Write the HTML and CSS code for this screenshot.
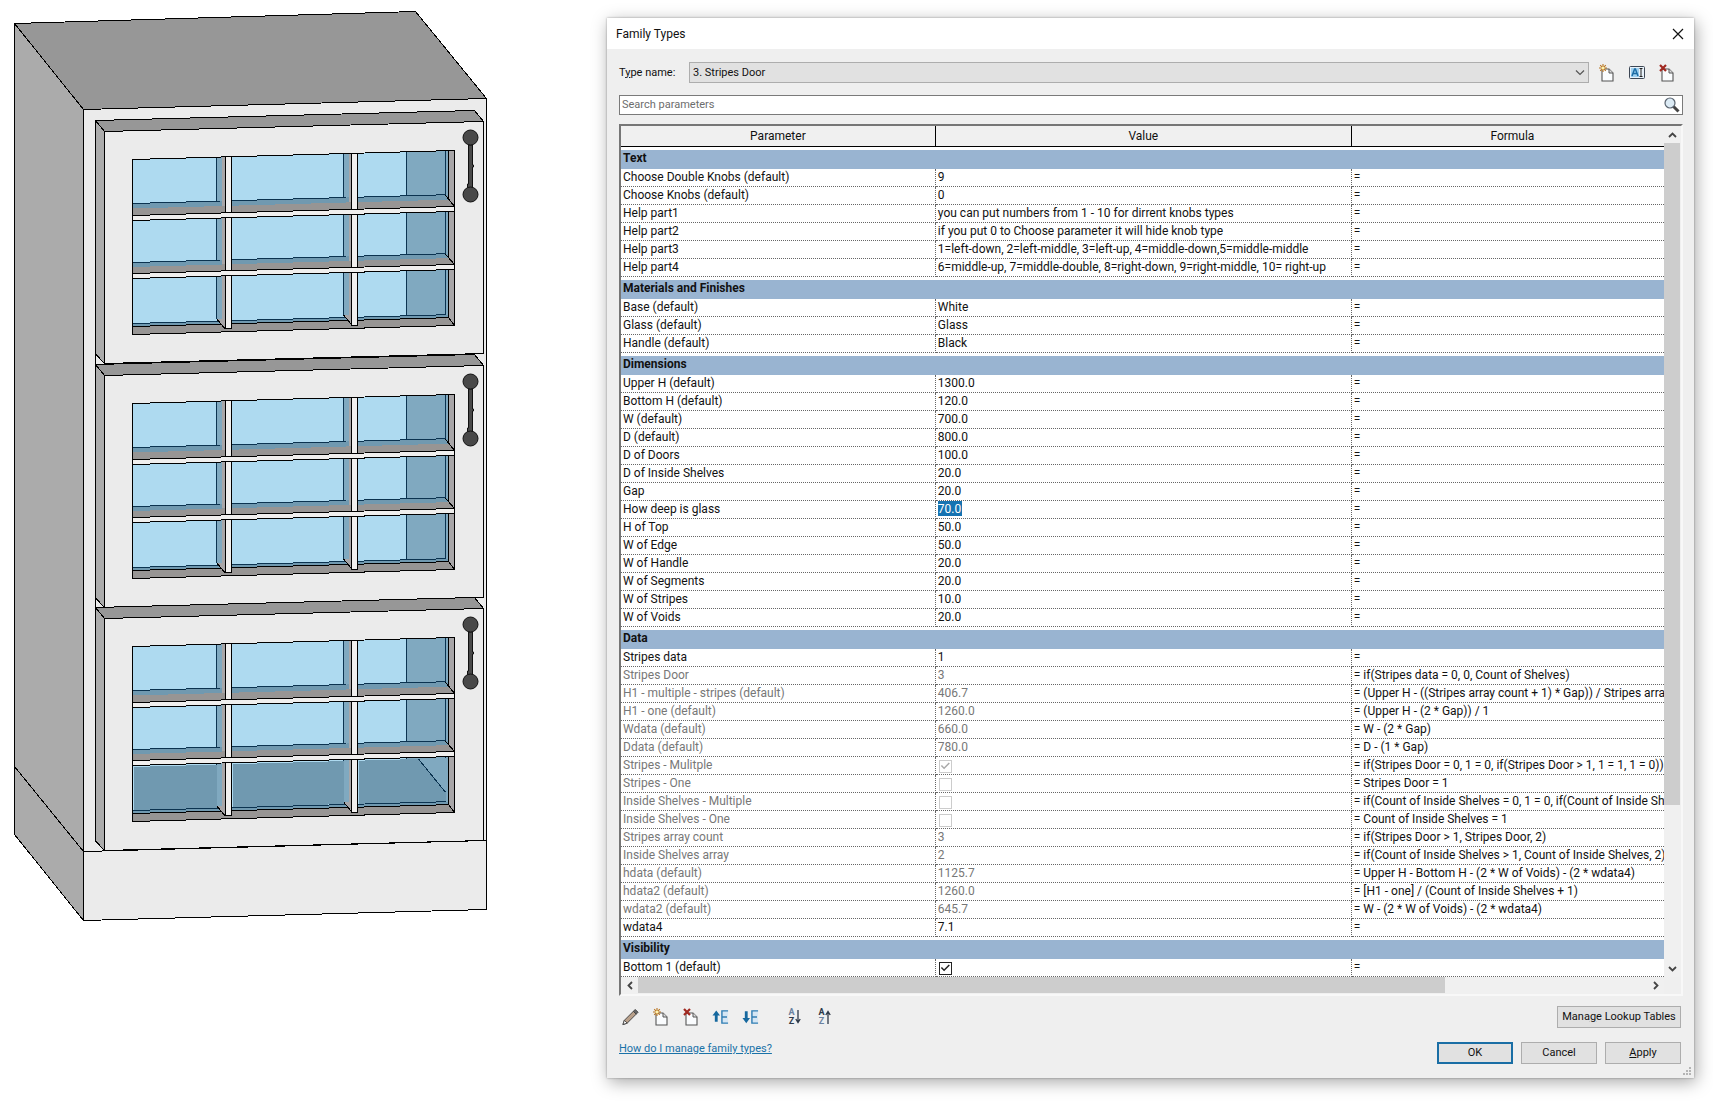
FILE: index.html
```html
<!DOCTYPE html>
<html lang="en">
<head>
<meta charset="utf-8">
<title>Family Types</title>
<link rel="stylesheet" href="styles.css">
</head>
<body>
<main class="workspace">
  <section class="viewport">
    <svg class="cabinet" viewBox="0 0 500 940" role="img" aria-label="Cabinet with three glazed doors">
      <defs>
        <g id="door">
          <path class="face-side" d="M95.5 120.5L104.5 131.5V363.5L95.5 354Z"/>
          <path class="face-top" d="M95.5 120.5L474.5 110.5L483.5 121.5L104.5 131.5Z"/>
          <path class="face-front" d="M104.5 131.5L483.5 121.5V353.5L104.5 363.5Z"/>
          <g transform="matrix(1 -.028 0 1 132.5 0)">
            <rect class="glass" x="0" y="159.5" width="322" height="175"/>
            <rect class="glass-side" x="274" y="159.5" width="42" height="175"/>
            <rect class="glass-side" x="84" y="159.5" width="6" height="175"/>
            <rect class="glass-side" x="211" y="159.5" width="6" height="175"/>
            <path class="blue-line" d="M84 159.5V321M211 159.5V321M274 159.5V326M313 159.5V326"/>
            <rect class="glass-floor" x="0" y="203.5" width="316" height="6"/>
            <rect class="glass-floor" x="0" y="262.5" width="316" height="6"/>
            <rect class="glass-floor" x="0" y="323.5" width="316" height="4"/>
            <path class="blue-line" d="M0 203.5H87M99 203.5H213M225 203.5H313M0 262.5H87M99 262.5H213M225 262.5H313M0 323.5H87M99 323.5H213M225 323.5H313"/>
            <rect class="grey-side" x="89" y="159.5" width="4" height="172"/>
            <rect class="grey-side" x="216" y="159.5" width="4" height="172"/>
            <rect class="grey-side" x="316" y="159.5" width="6" height="175"/>
            <path class="line" d="M316 159.5V327"/>
            <path class="grey-floor" d="M0 208.5H317L322 215.5H0ZM0 267H317L322 273.5H0Z"/>
            <path class="grey-floor edged" d="M0 326.5H316L322 334.5H0Z"/>
            <path class="grey-side" d="M84 321L93 332V321Z"/>
            <path class="grey-side" d="M211 321L220 332V321Z"/>
            <path class="line" d="M84 321L93 332M211 321L220 332M313 204L322 215.5M313 263L322 273.5"/>
            <rect class="bar" x="93" y="159.5" width="6" height="172"/>
            <rect class="bar" x="219" y="159.5" width="6" height="172"/>
            <rect class="bar" x="0" y="215.5" width="322" height="5"/>
            <rect class="bar" x="0" y="273.5" width="322" height="5"/>
            <rect class="outline" x="0" y="159.5" width="322" height="175"/>
          </g>
          <path class="handle" d="M468.5 145H472.5V165H473.5V167H472.5V188H467.5V184H468.5Z"/>
          <circle class="handle" cx="470.5" cy="137.5" r="7.5"/>
          <circle class="handle" cx="470.5" cy="194.5" r="7.5"/>
        </g>
      </defs>
      <path class="face-top" d="M14.5 23.5L415.5 11.5L486.5 98.5L83.5 109.5Z"/>
      <path class="face-side" d="M14.5 23.5L83.5 109.5V920.5L14.5 834.5Z"/>
      <path class="face-front" d="M83.5 109.5L486.5 98.5V909.5L83.5 920.5Z"/>
      <path class="line" d="M14.5 766.5L83.5 851.5L486.5 840.5"/>
      <path class="line" d="M95.5 120V840"/>
      <use href="#door"/>
      <use href="#door" y="244"/>
      <use href="#door" y="487"/>
      <g transform="matrix(1 -.028 0 1 132.5 487)">
        <rect class="glass-floor" x="1" y="280" width="83" height="43"/>
        <rect class="glass-floor" x="100" y="280" width="111" height="43"/>
        <rect class="glass-floor" x="226" y="280" width="87" height="43"/>
        <path class="glass-side" d="M286 280L313 314V280Z"/>
        <path class="blue-line" d="M286 280L313 314"/>
      </g>
    </svg>
  </section>

  <section class="dialog" role="dialog" aria-labelledby="dialog-title">
    <header class="titlebar">
      <h1 id="dialog-title">Family Types</h1>
      <button class="icon-button" type="button" aria-label="Close">
        <svg width="12" height="12" viewBox="0 0 12 12"><path d="M1 1L11 11M11 1L1 11" stroke="#111" stroke-width="1.2" fill="none"/></svg>
      </button>
    </header>

    <div class="dialog-body">
      <div class="type-row">
        <label for="type-name">T<u>y</u>pe name:</label>
        <span class="select-wrap">
          <select id="type-name"><option>3. Stripes Door</option></select>
          <svg class="chevron" width="10" height="6" viewBox="0 0 10 6"><path d="M1 .5L5 4.5L9 .5" stroke="#555" stroke-width="1.2" fill="none"/></svg>
        </span>
        <div class="type-tools">
          <button class="icon-button" type="button" aria-label="New type">
            <svg width="16" height="18" viewBox="0 0 16 18"><path d="M3 5H10L14 9V17H3Z" fill="#fafcfe" stroke="#555" stroke-width="1.1"/><path d="M10 5V9H14" fill="#ddd" stroke="#555"/><path d="M4 0V8M0 4H8M1.2 1.2L6.8 6.8M6.8 1.2L1.2 6.8" stroke="#b87420" stroke-width="1.1"/><circle cx="4" cy="4" r="1.6" fill="#fff3b0"/></svg>
          </button>
          <button class="icon-button" type="button" aria-label="Rename type">
            <svg width="16" height="18" viewBox="0 0 16 18"><rect x=".5" y="2.5" width="15" height="12" rx="1" fill="#e8f2fa" stroke="#3c4654"/><rect x="2" y="4" width="8" height="9" fill="#9fd0f0"/><path d="M3 12L5.600 5H6.400L9 12M4 9.500H8" stroke="#1c6ca4" stroke-width="1.500" fill="none"/><path d="M10.500 4.500H13.500M12 4.500V12.500M10.500 12.500H13.500" stroke="#222" fill="none"/></svg>
          </button>
          <button class="icon-button" type="button" aria-label="Delete type">
            <svg width="16" height="18" viewBox="0 0 16 18"><path d="M3 5H10L14 9V17H3Z" fill="#fafcfe" stroke="#555" stroke-width="1.1"/><path d="M10 5V9H14" fill="#ddd" stroke="#555"/><path d="M1 1L7 7M7 1L1 7" stroke="#a02820" stroke-width="2.200"/></svg>
          </button>
        </div>
      </div>

      <div class="search">
        <input type="search" placeholder="Search parameters" aria-label="Search parameters">
        <button class="icon-button" type="button" aria-label="Search">
          <svg width="16" height="16" viewBox="0 0 16 16"><path d="M9.500 9.500L14.500 14.500" stroke="#444" stroke-width="3"/><circle cx="6" cy="6" r="5" fill="#dcebf5" stroke="#5a6470" stroke-width="1.200"/></svg>
        </button>
      </div>

      <div class="grid-frame">
        <div class="grid-view">
          <table class="params">
            <colgroup><col class="col-name"><col class="col-value"><col></colgroup>
            <thead><tr><th>Parameter</th><th>Value</th><th>Formula</th></tr></thead>
            <tbody>
              <tr class="group"><th colspan="3">Text</th></tr>
              <tr><td>Choose Double Knobs (default)</td><td>9</td><td>=</td></tr>
              <tr><td>Choose Knobs (default)</td><td>0</td><td>=</td></tr>
              <tr><td>Help part1</td><td>you can put numbers from 1 - 10 for dirrent knobs types</td><td>=</td></tr>
              <tr><td>Help part2</td><td>if you put 0 to Choose parameter it will hide knob type</td><td>=</td></tr>
              <tr><td>Help part3</td><td>1=left-down, 2=left-middle, 3=left-up, 4=middle-down,5=middle-middle</td><td>=</td></tr>
              <tr><td>Help part4</td><td>6=middle-up, 7=middle-double, 8=right-down, 9=right-middle, 10= right-up</td><td>=</td></tr>
            </tbody>
            <tbody>
              <tr class="group"><th colspan="3">Materials and Finishes</th></tr>
              <tr><td>Base (default)</td><td>White</td><td>=</td></tr>
              <tr><td>Glass (default)</td><td>Glass</td><td>=</td></tr>
              <tr><td>Handle (default)</td><td>Black</td><td>=</td></tr>
            </tbody>
            <tbody>
              <tr class="group"><th colspan="3">Dimensions</th></tr>
              <tr><td>Upper H (default)</td><td>1300.0</td><td>=</td></tr>
              <tr><td>Bottom H (default)</td><td>120.0</td><td>=</td></tr>
              <tr><td>W (default)</td><td>700.0</td><td>=</td></tr>
              <tr><td>D (default)</td><td>800.0</td><td>=</td></tr>
              <tr><td>D of Doors</td><td>100.0</td><td>=</td></tr>
              <tr><td>D of Inside Shelves</td><td>20.0</td><td>=</td></tr>
              <tr><td>Gap</td><td>20.0</td><td>=</td></tr>
              <tr><td><label for="glass-depth">How deep is glass</label></td><td><input class="cell-edit" id="glass-depth" type="text" value="70.0"></td><td>=</td></tr>
              <tr><td>H of Top</td><td>50.0</td><td>=</td></tr>
              <tr><td>W of Edge</td><td>50.0</td><td>=</td></tr>
              <tr><td>W of Handle</td><td>20.0</td><td>=</td></tr>
              <tr><td>W of Segments</td><td>20.0</td><td>=</td></tr>
              <tr><td>W of Stripes</td><td>10.0</td><td>=</td></tr>
              <tr><td>W of Voids</td><td>20.0</td><td>=</td></tr>
            </tbody>
            <tbody>
              <tr class="group"><th colspan="3">Data</th></tr>
              <tr><td>Stripes data</td><td>1</td><td>=</td></tr>
              <tr class="driven"><td>Stripes Door</td><td>3</td><td>= if(Stripes data = 0, 0, Count of Shelves)</td></tr>
              <tr class="driven"><td>H1 - multiple - stripes (default)</td><td>406.7</td><td>= (Upper H - ((Stripes array count + 1) * Gap)) / Stripes array count</td></tr>
              <tr class="driven"><td>H1 - one (default)</td><td>1260.0</td><td>= (Upper H - (2 * Gap)) / 1</td></tr>
              <tr class="driven"><td>Wdata (default)</td><td>660.0</td><td>= W - (2 * Gap)</td></tr>
              <tr class="driven"><td>Ddata (default)</td><td>780.0</td><td>= D - (1 * Gap)</td></tr>
              <tr class="driven"><td><label for="c1">Stripes - Mulitple</label></td><td><input type="checkbox" id="c1" checked disabled></td><td>= if(Stripes Door = 0, 1 = 0, if(Stripes Door &gt; 1, 1 = 1, 1 = 0))</td></tr>
              <tr class="driven"><td><label for="c2">Stripes - One</label></td><td><input type="checkbox" id="c2" disabled></td><td>= Stripes Door = 1</td></tr>
              <tr class="driven"><td><label for="c3">Inside Shelves - Multiple</label></td><td><input type="checkbox" id="c3" disabled></td><td>= if(Count of Inside Shelves = 0, 1 = 0, if(Count of Inside Shelves</td></tr>
              <tr class="driven"><td><label for="c4">Inside Shelves - One</label></td><td><input type="checkbox" id="c4" disabled></td><td>= Count of Inside Shelves = 1</td></tr>
              <tr class="driven"><td>Stripes array count</td><td>3</td><td>= if(Stripes Door &gt; 1, Stripes Door, 2)</td></tr>
              <tr class="driven"><td>Inside Shelves array</td><td>2</td><td>= if(Count of Inside Shelves &gt; 1, Count of Inside Shelves, 2)</td></tr>
              <tr class="driven"><td>hdata (default)</td><td>1125.7</td><td>= Upper H - Bottom H - (2 * W of Voids) - (2 * wdata4)</td></tr>
              <tr class="driven"><td>hdata2 (default)</td><td>1260.0</td><td>= [H1 - one] / (Count of Inside Shelves + 1)</td></tr>
              <tr class="driven"><td>wdata2 (default)</td><td>645.7</td><td>= W - (2 * W of Voids) - (2 * wdata4)</td></tr>
              <tr><td>wdata4</td><td>7.1</td><td>=</td></tr>
            </tbody>
            <tbody>
              <tr class="group"><th colspan="3">Visibility</th></tr>
              <tr><td><label for="c5">Bottom 1 (default)</label></td><td><input type="checkbox" id="c5" checked></td><td>=</td></tr>
            </tbody>
          </table>
        </div>
        <div class="scroll-v">
          <button class="arrow" type="button" aria-label="Scroll up"><svg width="9" height="6" viewBox="0 0 9 6"><path d="M1 5L4.500 1.500L8 5" stroke="#444" stroke-width="1.800" fill="none"/></svg></button>
          <div class="track"><div class="thumb"></div></div>
          <button class="arrow" type="button" aria-label="Scroll down"><svg width="9" height="6" viewBox="0 0 9 6"><path d="M1 1L4.500 4.500L8 1" stroke="#444" stroke-width="1.800" fill="none"/></svg></button>
        </div>
        <div class="scroll-h">
          <button class="arrow" type="button" aria-label="Scroll left"><svg width="6" height="9" viewBox="0 0 6 9"><path d="M5 1L1.500 4.500L5 8" stroke="#444" stroke-width="1.800" fill="none"/></svg></button>
          <div class="track"><div class="thumb"></div></div>
          <button class="arrow" type="button" aria-label="Scroll right"><svg width="6" height="9" viewBox="0 0 6 9"><path d="M1 1L4.500 4.500L1 8" stroke="#444" stroke-width="1.800" fill="none"/></svg></button>
        </div>
      </div>

      <div class="toolbar">
        <div class="tools">
          <button class="icon-button" type="button" aria-label="Edit parameter">
            <svg width="18" height="18" viewBox="0 0 18 18"><path d="M1 17L2.500 12.500L12 3L15 6L5.500 15.500Z" fill="#b9a08a" stroke="#444"/><path d="M1 17L2.500 12.500L5.500 15.500Z" fill="#fff" stroke="#444"/><path d="M12 3L14 1L17 4L15 6Z" fill="#666" stroke="#444"/></svg>
          </button>
          <button class="icon-button" type="button" aria-label="New parameter">
            <svg width="16" height="18" viewBox="0 0 16 18"><path d="M3 5H10L14 9V17H3Z" fill="#fafcfe" stroke="#555" stroke-width="1.1"/><path d="M10 5V9H14" fill="#ddd" stroke="#555"/><path d="M4 0V8M0 4H8M1.200 1.200L6.800 6.800M6.800 1.200L1.200 6.800" stroke="#b87420" stroke-width="1.1"/><circle cx="4" cy="4" r="1.600" fill="#fff3b0"/></svg>
          </button>
          <button class="icon-button" type="button" aria-label="Delete parameter">
            <svg width="16" height="18" viewBox="0 0 16 18"><path d="M3 5H10L14 9V17H3Z" fill="#fafcfe" stroke="#555" stroke-width="1.1"/><path d="M10 5V9H14" fill="#ddd" stroke="#555"/><path d="M1 1L7 7M7 1L1 7" stroke="#a02820" stroke-width="2.200"/></svg>
          </button>
          <button class="icon-button" type="button" aria-label="Move up">
            <svg width="18" height="18" viewBox="0 0 18 18"><path d="M4.500 2L8.500 7.500H6V14H3V7.500H.5Z" fill="#16689e"/><path d="M11 3H17V8H11ZM11 10H17V15H11Z" fill="#d5e6f4"/><path d="M17 2.500H10.500V15.500H17M10.500 9H16" stroke="#2c7cb4" stroke-width="1.500" fill="none"/></svg>
          </button>
          <button class="icon-button" type="button" aria-label="Move down">
            <svg width="18" height="18" viewBox="0 0 18 18"><path d="M4.500 15.500L8.500 10H6V3H3V10H.5Z" fill="#16689e"/><path d="M11 3H17V8H11ZM11 10H17V15H11Z" fill="#d5e6f4"/><path d="M17 2.500H10.500V15.500H17M10.500 9H16" stroke="#2c7cb4" stroke-width="1.500" fill="none"/></svg>
          </button>
          <button class="icon-button sort" type="button" aria-label="Sort ascending">
            <span class="az"><b class="soft">A</b><b>Z</b></span>
            <svg width="6" height="14" viewBox="0 0 6 14"><path d="M3 0V12M.8 9L3 12.500L5.200 9" stroke="#2c3848" stroke-width="1.300" fill="none"/></svg>
          </button>
          <button class="icon-button" type="button" aria-label="Sort descending">
            <span class="az"><b>A</b><b class="soft">Z</b></span>
            <svg width="6" height="14" viewBox="0 0 6 14"><path d="M3 14V2M.8 5L3 1.500L5.200 5" stroke="#2c3848" stroke-width="1.300" fill="none"/></svg>
          </button>
        </div>
        <button class="push wide" type="button">Mana<u>g</u>e Lookup Tables</button>
      </div>

      <footer class="actions">
        <a href="#help">How do I manage family types?</a>
        <div class="buttons">
          <button class="push default" type="button">OK</button>
          <button class="push" type="button">Cancel</button>
          <button class="push" type="button"><u>A</u>pply</button>
        </div>
      </footer>
    </div>
    <svg class="grip" width="9" height="9" viewBox="0 0 9 9"><path d="M6 0h2v2h-2zM3 3h2v2h-2zM6 3h2v2h-2zM0 6h2v2h-2zM3 6h2v2h-2zM6 6h2v2h-2z" fill="#b4b4b4"/></svg>
  </section>
</main>
</body>
</html>
```
FILE: styles.css
```css
* {
  box-sizing: border-box;
}

body {
  margin: 0;
  background: #fff;
  color: #111;
  font: 12px/16px Roboto, "Open Sans", sans-serif;
}

button,
input,
select {
  margin: 0;
  font: inherit;
  color: inherit;
}

.workspace {
  display: grid;
  grid-template-columns: minmax(0, 607fr) minmax(0, 1087fr);
  align-items: start;
  min-height: 100vh;
  padding-right: 19px;
}

/* Cabinet drawing */

.cabinet {
  display: block;
  width: 500px;
  max-width: 100%;
  shape-rendering: crispEdges;
}

.face-top { fill: #979797; stroke: #000; }
.face-side { fill: #ababab; stroke: #000; }
.face-front { fill: #ebebeb; stroke: #000; }
.line { fill: none; stroke: #000; }
.outline { fill: none; stroke: #000; }
.blue-line { fill: none; stroke: #0b3350; }
.glass { fill: #aedaf0; }
.glass-side { fill: #80a9c0; }
.glass-floor { fill: #7099b0; }
.grey-side { fill: #a8a6a8; }
.grey-floor { fill: #979594; }
.edged { stroke: #000; }
.bar { fill: #f0efee; stroke: #000; }
.handle { fill: #484848; stroke: #111; shape-rendering: auto; }

/* Dialog */

.dialog {
  position: relative;
  margin: 18px 0;
  background: #efefef;
  box-shadow: 0 0 2px rgba(0, 0, 0, .35), 2px 4px 16px rgba(0, 0, 0, .35);
}

.titlebar {
  display: flex;
  align-items: center;
  justify-content: space-between;
  height: 31px;
  padding: 0 10px 0 9px;
  background: #fff;
}

.titlebar h1 {
  margin: 0;
  font-size: 12px;
  font-weight: 400;
}

.dialog-body {
  display: flex;
  flex-direction: column;
  padding: 13px 11px 14px 12px;
}

.icon-button {
  display: flex;
  align-items: center;
  padding: 0;
  border: 0;
  background: none;
}

.type-row {
  display: flex;
  align-items: center;
  margin-bottom: 12px;
  font-size: 11px;
}

.type-row label {
  width: 70px;
}

.select-wrap {
  position: relative;
  flex: 1;
  height: 21px;
}

.select-wrap select {
  display: block;
  width: 100%;
  height: 100%;
  padding: 0 3px;
  border: 1px solid #adadad;
  border-radius: 0;
  background: #e1e1e1;
  appearance: none;
}

.chevron {
  position: absolute;
  top: 8px;
  right: 4px;
}

.type-tools {
  display: flex;
  gap: 14px;
  margin: 0 8px 0 10px;
}

.search {
  display: flex;
  height: 20px;
  margin-bottom: 9px;
  padding: 0 2px;
  border: 1px solid #7a7a7a;
  background: #fff;
  font-size: 11px;
}

.search input {
  flex: 1;
  padding: 0;
  border: 0;
  outline: 0;
  background: none;
}

.search input::placeholder {
  color: #6d6d6d;
}

/* Parameter grid */

.grid-frame {
  display: grid;
  grid-template-columns: minmax(0, 1fr) 17px;
  border: 2px solid;
  border-color: #767676 #f8f8f8 #f8f8f8 #767676;
}

.grid-view {
  overflow: hidden;
  background: #fff;
}

.params {
  width: calc(100% + 10px);
  border-collapse: separate;
  border-spacing: 0;
  table-layout: fixed;
}

.col-name { width: 29.9%; }
.col-value { width: 39.5%; }

.params th,
.params td {
  height: 18px;
  padding: 0 2px;
  overflow: hidden;
  white-space: nowrap;
  vertical-align: top;
}

.params thead th {
  height: 21px;
  border-right: 1px solid #000;
  border-bottom: 1px solid #000;
  background: #f0f0f0;
  font-weight: 400;
  vertical-align: middle;
}

.params td {
  border-right: 1px dotted #666;
  border-bottom: 1px dotted #666;
}

.params .group th {
  height: 22px;
  border-top: 3px solid #fff;
  background: #99b4d1;
  background-clip: padding-box;
  text-align: left;
  font-weight: 700;
}

.driven td {
  color: #777;
}

.driven td:last-child {
  color: #111;
}

.cell-edit {
  display: block;
  width: 24px;
  height: 15px;
  padding: 0;
  border: 0;
  background: #1673b1;
  color: #fff;
}

.params input[type="checkbox"] {
  display: block;
  width: 13px;
  height: 13px;
  margin: 3px 1px 0;
  border: 1px solid #222;
  background: #fff;
  appearance: none;
}

.params input[type="checkbox"]:checked::before {
  content: "";
  display: block;
  width: 9px;
  height: 8px;
  margin: 1px;
  background: #222;
  clip-path: polygon(0 50%, 12% 38%, 36% 66%, 88% 6%, 100% 18%, 36% 92%);
}

.params input[type="checkbox"]:disabled {
  border-color: #ccc;
}

.params input[type="checkbox"]:disabled::before {
  background: #aaa;
}

.scroll-v,
.scroll-h {
  display: flex;
  background: #f0f0f0;
}

.scroll-v {
  flex-direction: column;
}

.scroll-h {
  height: 17px;
}

.arrow {
  display: flex;
  flex: none;
  align-items: center;
  justify-content: center;
  width: 17px;
  height: 17px;
  padding: 0;
  border: 0;
  background: none;
}

.track {
  flex: 1;
}

.thumb {
  background: #cdcdcd;
}

.scroll-v .thumb {
  width: 16px;
  height: 81%;
}

.scroll-h .thumb {
  width: 80%;
  height: 16px;
}

/* Lower controls */

.toolbar,
.actions {
  display: flex;
  align-items: center;
  justify-content: space-between;
  padding-right: 2px;
}

.toolbar {
  height: 22px;
  margin: 10px 0 14px;
}

.tools {
  display: flex;
  gap: 13px;
  padding-left: 3px;
}

.tools .icon-button {
  width: 17px;
  justify-content: center;
}

.tools .sort {
  margin-left: 14px;
}

.az {
  display: flex;
  flex-direction: column;
  font-size: 9px;
  line-height: 9px;
  color: #2c3848;
}

.az .soft {
  color: #6a82a0;
}

.push {
  width: 76px;
  height: 22px;
  padding: 0;
  border: 1px solid #adadad;
  background: #e1e1e1;
  font-size: 11px;
  line-height: 18px;
  white-space: nowrap;
}

.push.wide {
  width: 124px;
}

.push.default {
  border: 2px solid #1a6ea5;
  line-height: 16px;
}

.buttons {
  display: flex;
  gap: 8px;
}

.actions {
  align-items: flex-start;
}

.actions a {
  color: #1a72a8;
  font-size: 11px;
  line-height: 14px;
}

.grip {
  position: absolute;
  right: 2px;
  bottom: 2px;
}
```
